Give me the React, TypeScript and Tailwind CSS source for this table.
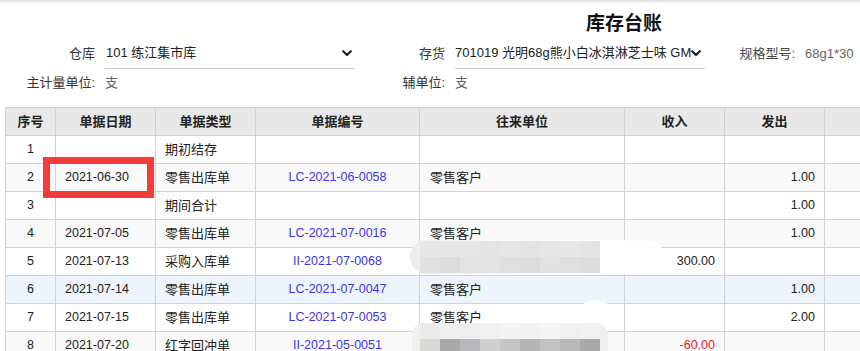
import React from "react";

type Row = {
  no: string;
  date: string;
  type: string;
  code: string;
  unit: string;
  inQty: string;
  outQty: string;
  bg: string;
  red?: boolean;
};

const rows: Row[] = [
  { no: "1", date: "", type: "期初结存", code: "", unit: "", inQty: "", outQty: "", bg: "bg-white" },
  { no: "2", date: "2021-06-30", type: "零售出库单", code: "LC-2021-06-0058", unit: "零售客户", inQty: "", outQty: "1.00", bg: "bg-[#f9f9f9]" },
  { no: "3", date: "", type: "期间合计", code: "", unit: "", inQty: "", outQty: "1.00", bg: "bg-white" },
  { no: "4", date: "2021-07-05", type: "零售出库单", code: "LC-2021-07-0016", unit: "零售客户", inQty: "", outQty: "1.00", bg: "bg-[#f9f9f9]" },
  { no: "5", date: "2021-07-13", type: "采购入库单", code: "II-2021-07-0068", unit: "", inQty: "300.00", outQty: "", bg: "bg-white" },
  { no: "6", date: "2021-07-14", type: "零售出库单", code: "LC-2021-07-0047", unit: "零售客户", inQty: "", outQty: "1.00", bg: "bg-[#eef4fc]" },
  { no: "7", date: "2021-07-15", type: "零售出库单", code: "LC-2021-07-0053", unit: "零售客户", inQty: "", outQty: "2.00", bg: "bg-white" },
  { no: "8", date: "2021-07-20", type: "红字回冲单", code: "II-2021-05-0051", unit: "", inQty: "-60.00", outQty: "", bg: "bg-[#f9f9f9]", red: true },
];

const mosaic5Top = ["#e8e8e8", "#e5e5e5", "#e6e6e6", "#e4e4e4", "#e6e6e6", "#e3e3e3", "#e6e6e6", "#e8e8e8", "#e4e4e4"];
const mosaic5Bot = ["#e1e1e1", "#dcdcdc", "#e3e3e3", "#e4e4e4", "#dfdfdf", "#dcdcdc", "#e2e2e2", "#dfdfdf", "#dcdcdc"];
const mosaic8Top = ["#e9eae9", "#efefef", "#eeeeee", "#f0f0f0", "#f3f3f3", "#f1f1f1", "#f4f4f4", "#f0f0f0", "#f2f2f2"];
const mosaic8Bot = ["#d9d9d6", "#a9a9a9", "#b9b8bd", "#cfcfcf", "#c6c6c4", "#b5b5b7", "#c2c0c0", "#b9b9b9", "#a9a9a8"];

function Chevron() {
  return (
    <svg width="10" height="7" viewBox="0 0 10 7" className="shrink-0">
      <path d="M1.2 1.2 L5 5 L8.8 1.2" fill="none" stroke="#222" strokeWidth="2.2" strokeLinecap="round" strokeLinejoin="round" />
    </svg>
  );
}

function Mosaic({ top, bottom }: { top: string[]; bottom: string[] }) {
  return (
    <div className="flex flex-col">
      <div className="flex">
        {top.map((c, i) => (
          <div key={i} className="w-[20px] h-[16px]" style={{ background: c }} />
        ))}
      </div>
      <div className="flex">
        {bottom.map((c, i) => (
          <div key={i} className="w-[20px] h-[16px]" style={{ background: c }} />
        ))}
      </div>
    </div>
  );
}

export default function App() {
  const font = { fontFamily: '"Liberation Sans", Arial, "Noto Sans CJK SC", sans-serif' };
  const th = "border border-[#d2d2d2] font-bold text-center text-[13px] text-[#222] p-0";
  const td = "border border-[#d2d2d2] p-0 whitespace-nowrap overflow-hidden";
  return (
    <div className="relative w-[860px] h-[351px] overflow-hidden bg-white" style={font}>
      <div className="h-[4px] bg-[linear-gradient(180deg,#dcdcdc_0%,#f2f2f2_50%,#ffffff_100%)]" />
      <div className="h-[34px] pt-[6px] pl-[586px] text-[19px] leading-[28px] font-bold text-[#111]">库存台账</div>

      {/* form row 1 */}
      <div className="flex items-center h-[31px] pl-[5px] text-[13px]">
        <div className="w-[90px] text-right text-[#333]">仓库</div>
        <div className="ml-[10px] w-[250px] h-[31px] flex items-center border-b border-[#c8c8c8] pr-[3px]">
          <span className="flex-1 overflow-hidden whitespace-nowrap text-[#222] pl-[1px]">101 练江集市库</span>
          <Chevron />
        </div>
        <div className="w-[90px] text-right text-[#333]">存货</div>
        <div className="ml-[10px] w-[250px] h-[31px] flex items-center border-b border-[#c8c8c8] pr-[4px]">
          <span className="flex-1 overflow-hidden whitespace-nowrap text-[#222]">701019 光明68g熊小白冰淇淋芝士味 GM</span>
          <Chevron />
        </div>
        <div className="w-[90px] text-right text-[#444]">规格型号:</div>
        <div className="ml-[10px] text-[#666]">68g1*30</div>
      </div>

      {/* form row 2 */}
      <div className="flex items-center h-[28px] pl-[5px] text-[13px]">
        <div className="w-[90px] text-right text-[#333]">主计量单位:</div>
        <div className="ml-[10px] w-[250px] text-[#666]">支</div>
        <div className="w-[90px] text-right text-[#333]">辅单位:</div>
        <div className="ml-[10px] w-[250px] text-[#666]">支</div>
      </div>

      {/* table */}
      <div className="mt-[10px] pl-[5px]">
        <table className="table-fixed border-collapse w-[919px]">
          <colgroup>
            <col className="w-[50px]" />
            <col className="w-[100px]" />
            <col className="w-[100px]" />
            <col className="w-[164px]" />
            <col className="w-[205px]" />
            <col className="w-[100px]" />
            <col className="w-[100px]" />
            <col className="w-[100px]" />
          </colgroup>
          <thead>
            <tr className="h-[28px] bg-[#e8e8e8]">
              <th className={th}>序号</th>
              <th className={th}>单据日期</th>
              <th className={th}>单据类型</th>
              <th className={th}>单据编号</th>
              <th className={th}>往来单位</th>
              <th className={th}>收入</th>
              <th className={th}>发出</th>
              <th className={th}></th>
            </tr>
          </thead>
          <tbody>
            {rows.map((r) => (
              <tr key={r.no} className={`h-[28px] ${r.bg}`}>
                <td className={`${td} text-center text-[12.5px] text-[#222]`}>{r.no}</td>
                <td className={`${td} text-left pl-[9px] text-[12.5px] text-[#222]`}>{r.date}</td>
                <td className={`${td} text-left pl-[9px] text-[13px] text-[#222]`}>{r.type}</td>
                <td className={`${td} text-center text-[12.5px] text-[#3a35e6]`}>{r.code}</td>
                <td className={`${td} text-left pl-[10px] text-[13px] text-[#222]`}>{r.unit}</td>
                <td className={`${td} text-right pr-[9px] text-[12.5px] ${r.red ? "text-[#f0152b]" : "text-[#222]"}`}>{r.inQty}</td>
                <td className={`${td} text-right pr-[9px] text-[12.5px] text-[#222]`}>{r.outQty}</td>
                <td className={td}></td>
              </tr>
            ))}
          </tbody>
        </table>
      </div>

      {/* highlight box */}
      <div className="absolute left-[43px] top-[157px] w-[111px] h-[41px] border-[7px] border-[#f43b3b]" />

      {/* blurred region, row 5 */}
      <div className="absolute left-[410px] top-[240px] w-[255px] h-[34px] rounded-[17px] bg-[linear-gradient(90deg,#ebebeb_0%,#f1f1f1_8%,#ffffff_78%,rgba(255,255,255,0.85)_100%)]" />
      <div className="absolute left-[420px] top-[241px]">
        <Mosaic top={mosaic5Top} bottom={mosaic5Bot} />
      </div>

      {/* blurred region, row 7/8 */}
      <div className="absolute left-[578px] top-[300px] w-[35px] h-[32px] rounded-full bg-white" />
      <div className="absolute left-[412px] top-[323px] w-[196px] h-[40px] rounded-[12px] bg-[#efefef]" />
      <div className="absolute left-[420px] top-[323px]">
        <Mosaic top={mosaic8Top} bottom={mosaic8Bot} />
      </div>
    </div>
  );
}
